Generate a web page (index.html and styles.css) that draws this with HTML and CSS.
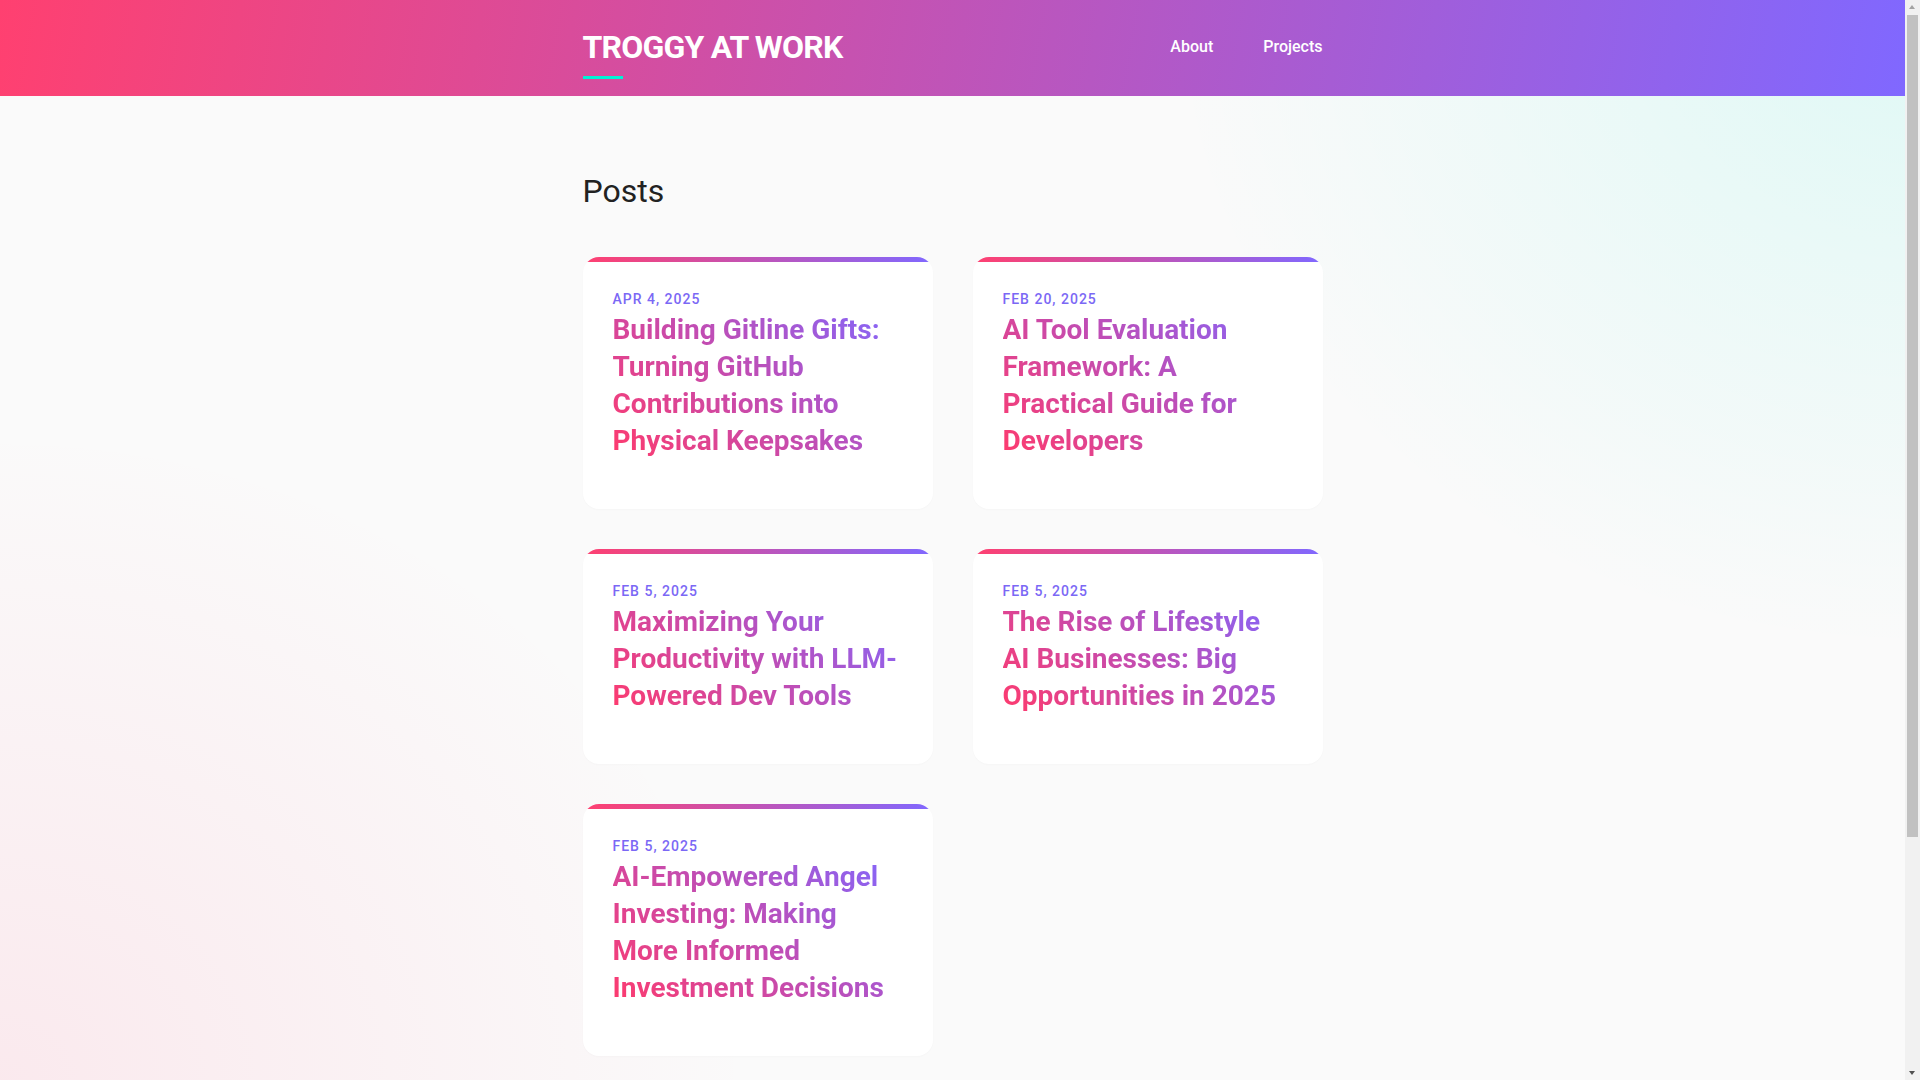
FILE: index.html
```html
<!DOCTYPE html>
<html lang="en">
<head>
<meta charset="utf-8">
<title>Troggy at Work</title>
<link rel="stylesheet" href="styles.css">
</head>
<body>
<header class="site-header">
  <div class="header-inner">
    <div class="logo">
      <a class="logo-text" href="#">TROGGY AT WORK</a>
      <span class="logo-bar"></span>
    </div>
    <nav class="nav">
      <a href="#">About</a>
      <a href="#">Projects</a>
    </nav>
  </div>
</header>
<main class="main">
  <h1 class="page-title">Posts</h1>
  <div class="grid">
    <article class="card">
      <div class="date">APR 4, 2025</div>
      <h2 class="title">Building Gitline Gifts: Turning GitHub Contributions into Physical Keepsakes</h2>
    </article>
    <article class="card">
      <div class="date">FEB 20, 2025</div>
      <h2 class="title">AI Tool Evaluation Framework: A Practical Guide for Developers</h2>
    </article>
    <article class="card">
      <div class="date">FEB 5, 2025</div>
      <h2 class="title">Maximizing Your Productivity with LLM-Powered Dev Tools</h2>
    </article>
    <article class="card">
      <div class="date">FEB 5, 2025</div>
      <h2 class="title">The Rise of Lifestyle AI Businesses: Big Opportunities in 2025</h2>
    </article>
    <article class="card">
      <div class="date">FEB 5, 2025</div>
      <h2 class="title">AI-Empowered Angel Investing: Making More Informed Investment Decisions</h2>
    </article>
  </div>
</main>
<div class="scrollbar" aria-hidden="true">
  <span class="sb-arrow sb-up"></span>
  <span class="sb-thumb"></span>
  <span class="sb-arrow sb-down"></span>
</div>
</body>
</html>
```
FILE: styles.css
```css
html {
  background:
    radial-gradient(ellipse 750px 650px at 100% 0%, rgba(0, 235, 205, 0.11), rgba(0, 235, 205, 0) 100%),
    radial-gradient(ellipse 750px 650px at 0% 100%, rgba(255, 64, 112, 0.09), rgba(255, 64, 112, 0) 100%),
    #fafafa;
  background-attachment: fixed;
}

body {
  margin: 0 15px 0 0;
  font-family: Roboto, "Liberation Sans", sans-serif;
  color: #222;
}

a {
  text-decoration: none;
  color: inherit;
}

.site-header {
  background: linear-gradient(100deg, #ff4070 0%, #8068ff 100%);
  padding: 28px 0 17px;
}

.header-inner {
  width: 740px;
  margin: 0 auto;
  display: flex;
  justify-content: space-between;
  align-items: flex-start;
}

.logo {
  display: flex;
  flex-direction: column;
}

.logo-text {
  font-size: 32px;
  line-height: 38px;
  font-weight: 700;
  color: #fff;
  letter-spacing: -0.8px;
}

.logo-bar {
  display: block;
  width: 40px;
  height: 3px;
  margin-top: 10px;
  background: #00f2d4;
}

.nav {
  display: flex;
  gap: 50px;
}

.nav a {
  font-size: 16px;
  line-height: 38px;
  font-weight: 500;
  color: #fff;
}

.main {
  width: 740px;
  margin: 0 auto;
  padding: 76px 0 327px;
}

.page-title {
  margin: 0 0 47px;
  font-size: 32px;
  line-height: 38px;
  font-weight: 400;
  color: #222;
}

.grid {
  display: grid;
  grid-template-columns: 350px 350px;
  gap: 40px;
}

.card {
  position: relative;
  background: #fff;
  border-radius: 16px;
  overflow: hidden;
  padding: 32px 30px;
  box-shadow: 0 1px 2px rgba(0, 0, 0, 0.02);
}

.card::before {
  content: "";
  position: absolute;
  left: 0;
  right: 0;
  top: 0;
  height: 5px;
  background: linear-gradient(90deg, #ff4070, #8068ff);
}

.date {
  font-size: 14px;
  line-height: 21px;
  font-weight: 500;
  letter-spacing: 1px;
  color: #7b68f5;
}

.title {
  margin: 1px 0 18px;
  font-size: 28px;
  line-height: 37px;
  font-weight: 700;
  background: linear-gradient(45deg, #ff3a6c 0%, #c04db5 50%, #8068ff 100%);
  -webkit-background-clip: text;
  background-clip: text;
  color: transparent;
}

.scrollbar {
  position: fixed;
  top: 0;
  right: 0;
  width: 15px;
  height: 100vh;
  background: #f1f1f1;
}

.sb-thumb {
  position: absolute;
  left: 2px;
  top: 15px;
  width: 11px;
  height: 822px;
  background: #c1c1c1;
}

.sb-arrow {
  position: absolute;
  left: 4px;
  width: 0;
  height: 0;
  border-left: 3.5px solid transparent;
  border-right: 3.5px solid transparent;
}

.sb-up {
  top: 5px;
  border-bottom: 4px solid #a3a3a3;
}

.sb-down {
  bottom: 5px;
  border-top: 4px solid #505050;
}
```
